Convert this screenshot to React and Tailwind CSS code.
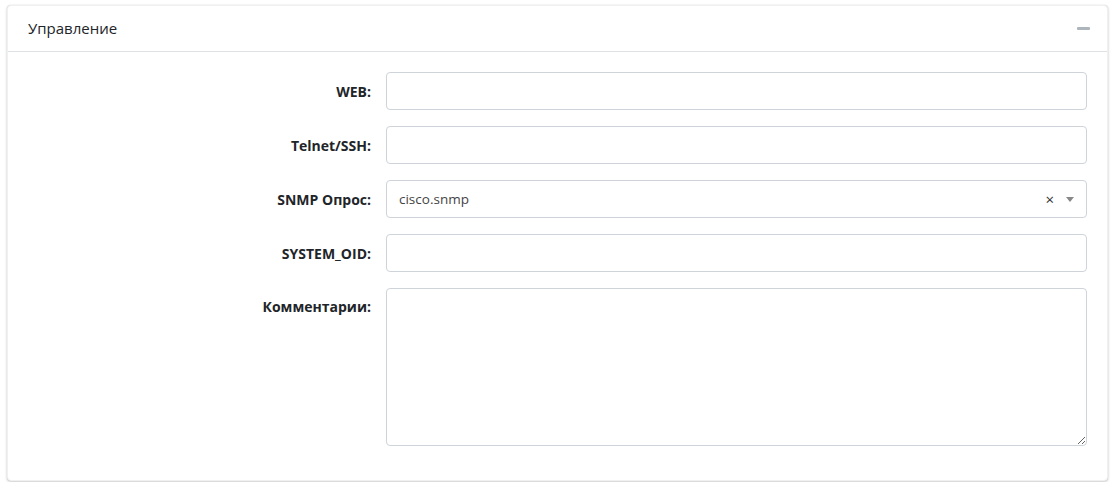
import { Minus } from 'lucide-react';

const fields = [
  { label: 'WEB:' },
  { label: 'Telnet/SSH:' },
  { label: 'SNMP Опрос:', select: 'cisco.snmp' },
  { label: 'SYSTEM_OID:' },
];

function App() {
  return (
    <div className="min-h-screen bg-white pl-[7px] pt-[5px] pr-[3px]" style={{ fontFamily: '"Open Sans", "Noto Sans", sans-serif' }}>
      <div className="w-[1101px] h-[476px] rounded-[4px] bg-white border border-[#f0f0f0] shadow-[0_0_1px_rgba(0,0,0,0.125),0_1px_3px_rgba(0,0,0,0.2)] flex flex-col">
        {/* Header */}
        <div className="h-[46px] flex items-center justify-between pl-[20px] pr-[17px] border-b border-[#dee2e6]">
          <span className="text-[15px] text-[#212529]">Управление</span>
          <div className="w-[13px] h-[3px] bg-[#adb5bd] rounded-[1px]" />
        </div>

        {/* Body */}
        <div className="px-[20px] pt-[20px] flex flex-col gap-[16px]">
          {fields.map((f) => (
            <div key={f.label} className="flex items-center gap-[15px]">
              <label className="w-[343px] text-right text-[14px] font-bold text-[#212529]">{f.label}</label>
              {f.select ? (
                <div className="flex-1 h-[38px] rounded-[4px] border border-[#ced4da] flex items-center pl-[12px] pr-[12px]">
                  <span className="flex-1 text-[13.5px] text-[#444]">{f.select}</span>
                  <span className="text-[15px] text-[#333] mr-[12px] leading-none">×</span>
                  <span className="w-0 h-0 border-l-[4px] border-r-[4px] border-t-[5px] border-l-transparent border-r-transparent border-t-[#888]" />
                </div>
              ) : (
                <input className="flex-1 h-[38px] rounded-[4px] border border-[#ced4da] outline-none px-3" />
              )}
            </div>
          ))}
          <div className="flex items-start gap-[15px]">
            <label className="w-[343px] text-right text-[14px] font-bold text-[#212529] pt-[8px]">Комментарии:</label>
            <textarea className="flex-1 h-[158px] rounded-[4px] border border-[#ced4da] outline-none px-3 resize-y" />
          </div>
        </div>
      </div>
    </div>
  );
}

export default App;
